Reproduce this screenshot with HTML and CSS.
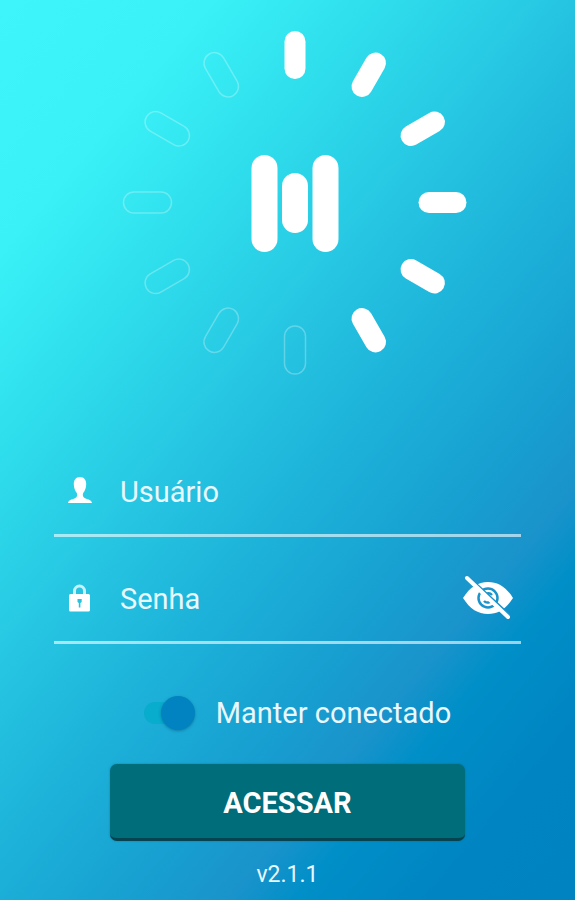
FILE: index.html
```html
<!DOCTYPE html>
<html lang="pt-BR">
<head>
<meta charset="utf-8">
<meta name="viewport" content="width=device-width, initial-scale=1">
<title>Acessar</title>
<link rel="stylesheet" href="styles.css">
</head>
<body>
<main class="login">
    <svg class="logo" viewBox="0 0 358 346" aria-hidden="true">
        <defs>
            <rect id="ray" x="-10.5" y="-171.500" width="21" height="48" rx="10.5"/>
        </defs>
        <g transform="translate(186 172.500)">
            <g class="on">
                <use href="#ray"/>
                <use href="#ray" transform="rotate(30)"/>
                <use href="#ray" transform="rotate(60)"/>
                <use href="#ray" transform="rotate(90)"/>
                <use href="#ray" transform="rotate(120)"/>
                <use href="#ray" transform="rotate(150)"/>
                <rect x="-43.5" y="-47.500" width="26" height="97" rx="13"/>
                <rect x="-13" y="-29.500" width="26" height="60" rx="13"/>
                <rect x="17.500" y="-47.500" width="26" height="97" rx="13"/>
            </g>
            <g class="off">
                <use href="#ray" transform="rotate(180)"/>
                <use href="#ray" transform="rotate(210)"/>
                <use href="#ray" transform="rotate(240)"/>
                <use href="#ray" transform="rotate(270)"/>
                <use href="#ray" transform="rotate(300)"/>
                <use href="#ray" transform="rotate(330)"/>
            </g>
        </g>
    </svg>
    <form class="form">
        <div class="field">
            <label for="user" aria-label="Usuário">
                <svg class="icon" viewBox="0 0 26 28">
                    <path d="M13 0c4 0 6.200 2.800 6.200 7 0 3.800-1.200 6.800-3 9-.8 2.200-.4 4.200 1.800 5.200 3.500 1.500 6.500 1.600 7 4.800H1c.5-3.200 3.500-3.300 7-4.800 2.200-1 2.600-3 1.800-5.200-1.800-2.200-3-5.200-3-9C6.800 2.800 9 0 13 0z"/>
                </svg>
            </label>
            <input type="text" id="user" placeholder="Usuário">
        </div>
        <div class="field">
            <label for="pass" aria-label="Senha">
                <svg class="icon" viewBox="0 0 26 28">
                    <path class="shackle" d="M7.500 12V7a5 5 0 0 1 10 0V12"/>
                    <path fill-rule="evenodd" d="M3.500 10h18a1.500 1.500 0 0 1 1.500 1.500V26a1.500 1.500 0 0 1-1.500 1.500h-18A1.500 1.500 0 0 1 2 26V11.500A1.500 1.500 0 0 1 3.500 10zM10.500 15v3l1.300 1v4.500h1.600V19l1.300-1v-3z"/>
                </svg>
            </label>
            <input type="password" id="pass" placeholder="Senha">
            <button type="button" class="eye" aria-label="Mostrar senha">
                <svg viewBox="0 0 52 48">
                    <path d="M1 24C8 13 16 8 26 8s18 5 25 16c-7 11-15 16-25 16S8 35 1 24z"/>
                    <circle class="iris" cx="26" cy="24" r="9.5"/>
                    <path class="iris" d="M22 27a5 5 0 0 0 8-1M24 20a5 5 0 0 1 6 1"/>
                    <path class="gap" d="M8 4l40 37"/>
                    <path class="slash" d="M5 4l41 39"/>
                </svg>
            </button>
        </div>
        <label class="keep">
            <input type="checkbox" class="switch" checked>
            <span>Manter conectado</span>
        </label>
        <button type="submit" class="enter">ACESSAR</button>
    </form>
    <div class="version">v2.1.1</div>
</main>
</body>
</html>
```
FILE: styles.css
```css
* {
    box-sizing: border-box;
}
body {
    margin: 0;
    min-height: 100vh;
    font-family: Roboto, "Liberation Sans", sans-serif;
    color: #e9f8ff;
    background: linear-gradient(130deg, #3df5fa 0%, #3af1f7 16%, #2fdfec 28%, #27c8e3 41%, #1db2d9 54%, #17a0d1 66%, #1a93cb 74%, #008fc8 79%, #0085c2 89%, #0083c1 100%);
}
.login {
    display: flex;
    flex-direction: column;
    align-items: center;
    padding: 30px 54px 0;
}
.logo {
    width: 358px;
    max-width: 100%;
}
.on {
    fill: white;
}
.off {
    fill: none;
    stroke: rgba(255, 255, 255, 0.27);
    stroke-width: 1.5;
}
.form {
    display: flex;
    flex-direction: column;
    align-items: center;
    gap: 17px;
    width: 100%;
    padding-top: 71px;
}
.field {
    display: flex;
    align-items: center;
    width: 100%;
    height: 90px;
    padding: 0 7px 0 13px;
    border-bottom: 3px solid rgba(255, 255, 255, 0.6);
}
.field input {
    flex: 1;
    min-width: 0;
    padding: 2px 0 0;
    margin-left: 27px;
    border: 0;
    outline: 0;
    background: none;
    font: inherit;
    font-size: 29px;
    color: inherit;
}
.field input::placeholder {
    color: inherit;
    opacity: 1;
}
.icon {
    display: block;
    width: 26px;
    height: 28px;
    fill: white;
}
.shackle {
    fill: none;
    stroke: #c8f1fa;
    stroke-width: 3;
}
.eye {
    padding: 0;
    border: 0;
    background: none;
}
.eye svg {
    display: block;
    width: 52px;
    height: 48px;
    fill: white;
}
.eye .iris {
    fill: none;
    stroke: #1b93cb;
    stroke-width: 2.5;
}
.eye .gap {
    stroke: #1b93cb;
    stroke-width: 2;
}
.eye .slash {
    stroke: white;
    stroke-width: 4;
    stroke-linecap: round;
}
.keep {
    display: flex;
    align-items: center;
    gap: 21px;
    height: 68px;
    margin-top: 18px;
    padding-left: 20px;
    font-size: 29px;
}
.switch {
    appearance: none;
    display: flex;
    align-items: center;
    justify-content: flex-end;
    width: 51px;
    height: 22px;
    margin: 0;
    border-radius: 11px;
    background: #08accd;
}
.switch::before {
    content: "";
    width: 34px;
    height: 34px;
    flex: none;
    border-radius: 50%;
    background: #0083c0;
    box-shadow: 0 1px 3px rgba(0, 60, 100, 0.4);
}
.enter {
    width: 76%;
    height: 77px;
    padding: 3px 0 0;
    border: 0;
    border-bottom: 3px solid #04434f;
    border-radius: 7px;
    background: #006d7a;
    box-shadow: 0 0 2px rgba(0, 80, 100, 0.5);
    font: inherit;
    font-size: 29px;
    font-weight: bold;
    color: white;
}
.version {
    padding-top: 20px;
    font-size: 23px;
    line-height: 28px;
}
```
